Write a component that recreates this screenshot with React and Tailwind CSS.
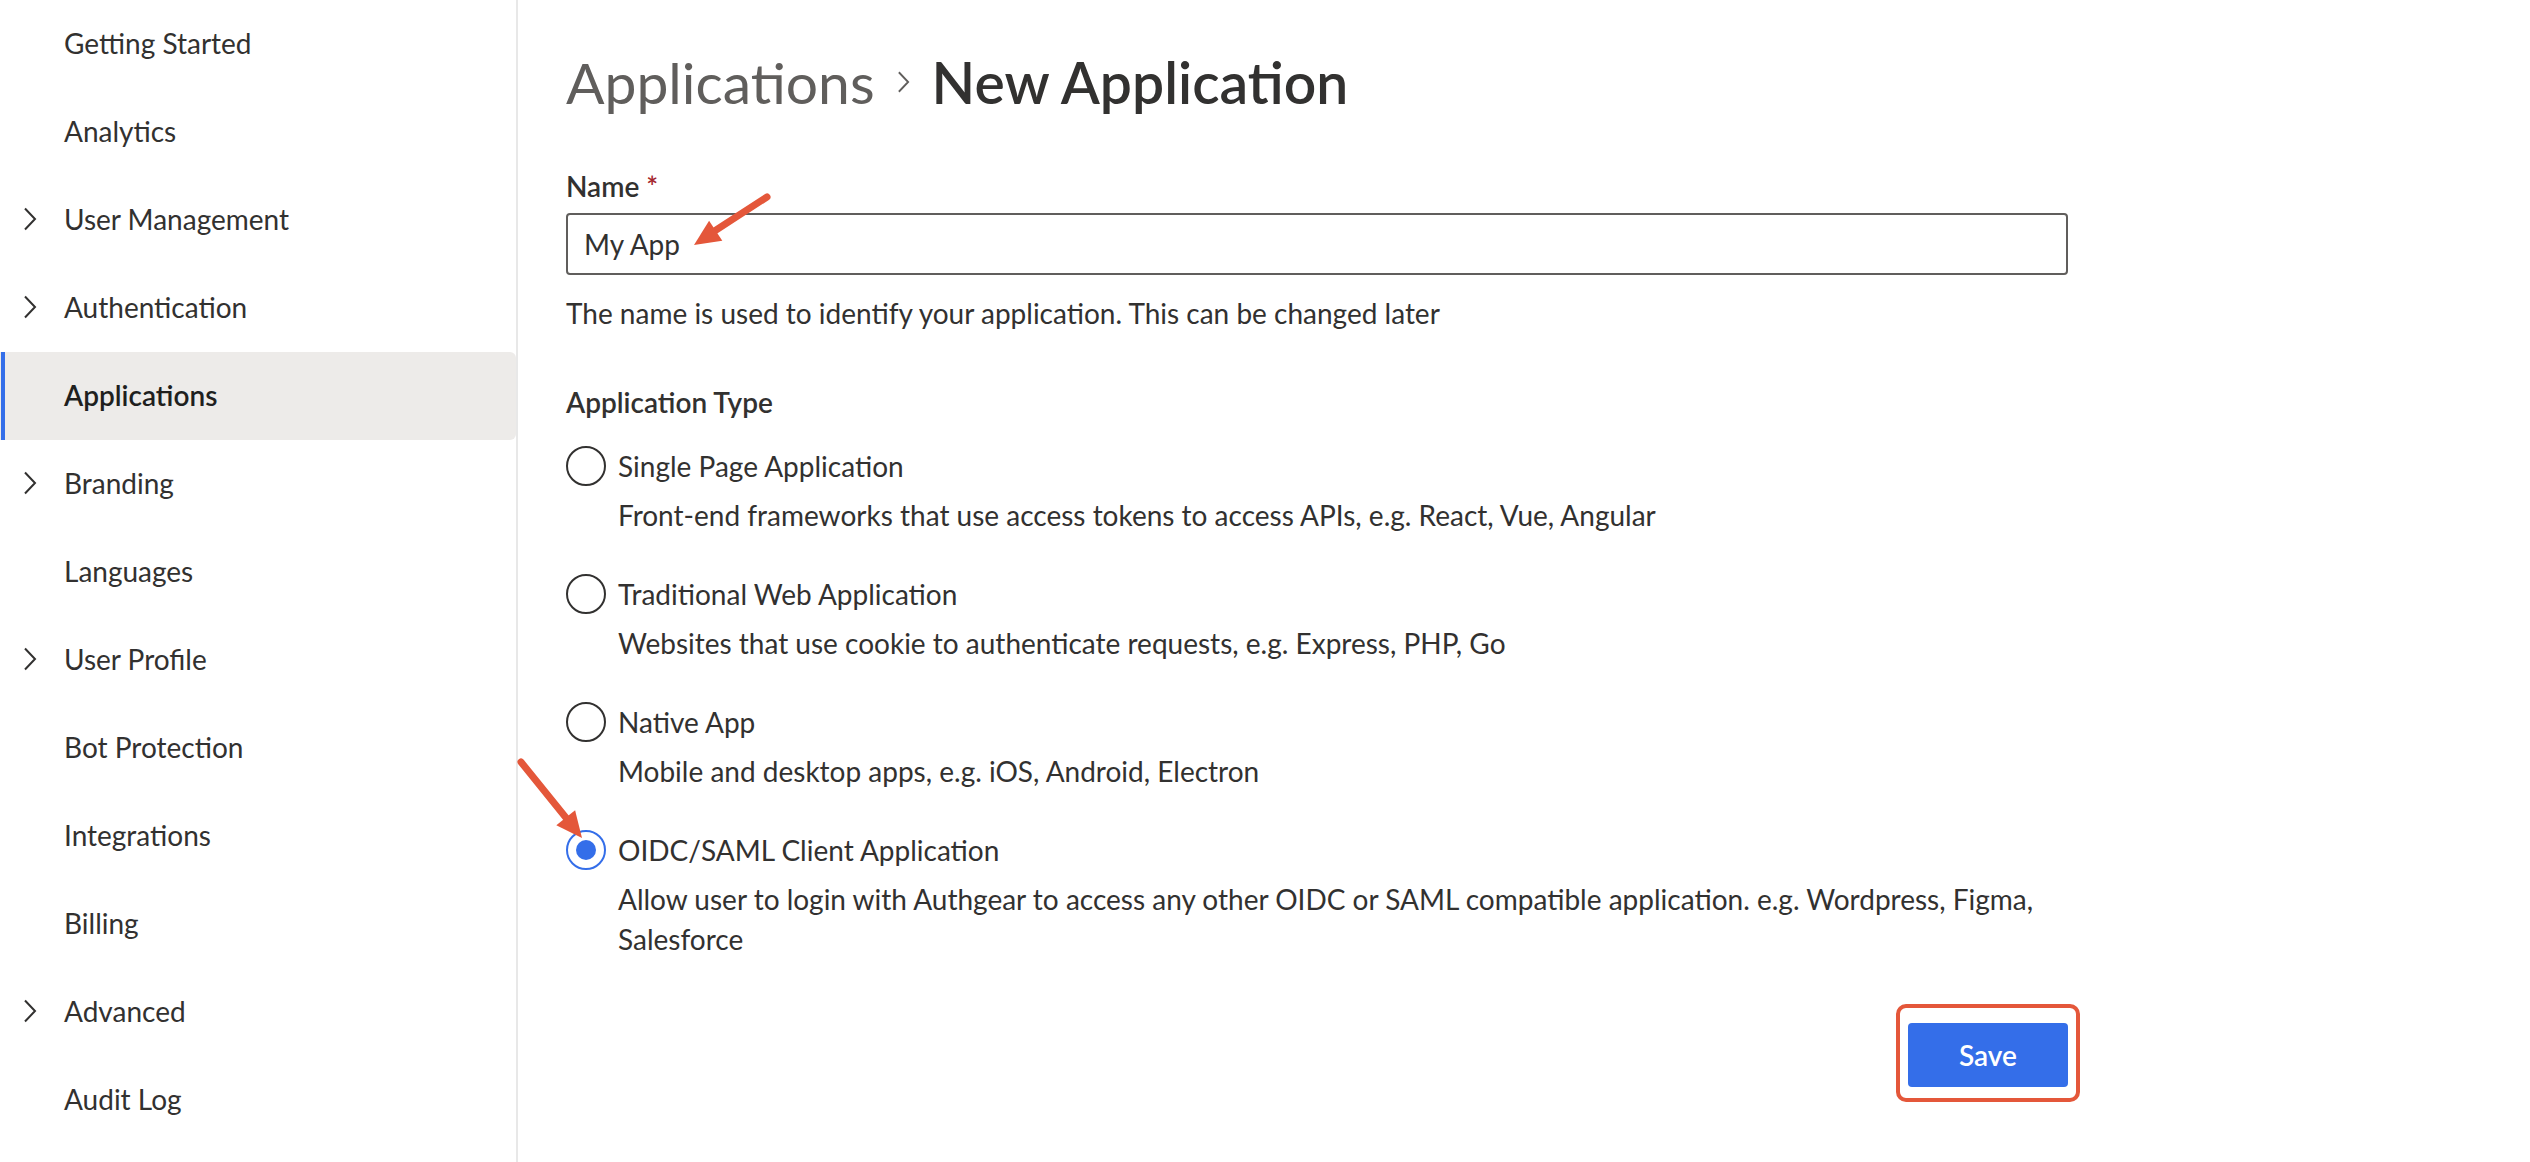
const NAV = [
  { label: "Getting Started" },
  { label: "Analytics" },
  { label: "User Management", expandable: true },
  { label: "Authentication", expandable: true },
  { label: "Applications", active: true },
  { label: "Branding", expandable: true },
  { label: "Languages" },
  { label: "User Profile", expandable: true },
  { label: "Bot Protection" },
  { label: "Integrations" },
  { label: "Billing" },
  { label: "Advanced", expandable: true },
  { label: "Audit Log" },
];

const APP_TYPES = [
  {
    title: "Single Page Application",
    desc: "Front-end frameworks that use access tokens to access APIs, e.g. React, Vue, Angular",
  },
  {
    title: "Traditional Web Application",
    desc: "Websites that use cookie to authenticate requests, e.g. Express, PHP, Go",
  },
  {
    title: "Native App",
    desc: "Mobile and desktop apps, e.g. iOS, Android, Electron",
  },
  {
    title: "OIDC/SAML Client Application",
    desc: (
      <>
        Allow user to login with Authgear to access any other OIDC or SAML compatible application. e.g. Wordpress, Figma,
        <br />
        Salesforce
      </>
    ),
    selected: true,
  },
];

function Chevron({ className, color = "#323130" }) {
  return (
    <svg className={className} width="14" height="24" viewBox="0 0 14 24" fill="none">
      <path d="M2 1.5 L12 12 L2 22.5" stroke={color} strokeWidth="2" strokeLinejoin="miter" />
    </svg>
  );
}

function NavItem({ item }) {
  return (
    <div
      className={
        "relative flex h-[88px] items-center pb-[3px] " +
        (item.active ? "rounded-r-[6px] bg-[#edebe9] font-semibold text-[#201f1e]" : "text-[#323130]")
      }
    >
      {item.active && <span className="absolute left-[1px] top-0 bottom-0 w-[4px] bg-[#346ee9]" />}
      <div className="flex w-[64px] shrink-0 pl-[23px]">
        {item.expandable && <Chevron />}
      </div>
      <span className="text-[28px] leading-[40px]">{item.label}</span>
    </div>
  );
}

function RadioOption({ option }) {
  return (
    <div className="flex">
      <div className="w-[52px] shrink-0">
        {option.selected ? (
          <div className="flex h-[40px] w-[40px] items-center justify-center rounded-full border-2 border-[#346ee9]">
            <div className="h-[20px] w-[20px] rounded-full bg-[#346ee9]" />
          </div>
        ) : (
          <div className="h-[40px] w-[40px] rounded-full border-2 border-[#323130]" />
        )}
      </div>
      <div>
        <div className="text-[28px] leading-[40px] text-[#323130]">{option.title}</div>
        <div className="mt-[9px] whitespace-nowrap text-[28px] leading-[40px] text-[#323130]">{option.desc}</div>
      </div>
    </div>
  );
}

export default function App() {
  return (
    <div className="relative flex h-[1162px] w-full overflow-hidden bg-white font-['Lato',sans-serif] text-[#323130]">
      <aside className="w-[518px] shrink-0 border-r-2 border-[#e8e8e8]">
        {NAV.map((item) => (
          <NavItem key={item.label} item={item} />
        ))}
      </aside>

      <main className="flex-1 pl-[48px] pt-[44px]">
        <div className="w-[1502px]">
          <h1 className="flex items-center text-[57px] leading-[76px]">
            <span className="font-normal text-[#605e5c]">Applications</span>
            <Chevron className="mx-[22px] h-[24px] w-[13px]" color="#605e5c" />
            <span className="font-semibold text-[#323130]">New Application</span>
          </h1>

          <div className="mt-[46px] text-[28px] font-semibold leading-[40px]">
            Name <span className="text-[#a4262c]">*</span>
          </div>
          <input
            readOnly
            value="My App"
            className="mt-[7px] block h-[62px] w-full rounded-[4px] border-2 border-[#605e5c] px-[16px] text-[28px] text-[#323130] outline-none"
          />
          <p className="mt-[18px] text-[28px] leading-[40px]">
            The name is used to identify your application. This can be changed later
          </p>

          <div className="mt-[49px] text-[28px] font-semibold leading-[40px]">Application Type</div>
          <div className="mt-[24px] flex flex-col gap-[39px]">
            {APP_TYPES.map((opt) => (
              <RadioOption key={opt.title} option={opt} />
            ))}
          </div>

          <div className="mt-[64px] flex justify-end">
            <div className="relative">
              <span className="absolute -left-[12px] -right-[12px] -top-[19px] -bottom-[15px] rounded-[10px] border-4 border-[#e4573a]" />
              <button className="relative h-[64px] w-[160px] rounded-[4px] bg-[#346ee9] text-[28px] font-semibold text-white">
                Save
              </button>
            </div>
          </div>
        </div>
      </main>

      <svg className="pointer-events-none absolute inset-0" width="2530" height="1162" viewBox="0 0 2530 1162">
        <line x1="767" y1="197" x2="713" y2="232" stroke="#e4573a" strokeWidth="7" strokeLinecap="round" />
        <polygon points="694,245 722.3,240.7 709.1,220.7" fill="#e4573a" />
        <line x1="521" y1="762" x2="567" y2="819" stroke="#e4573a" strokeWidth="7" strokeLinecap="round" />
        <polygon points="582,838 575.1,810.2 556.3,825.2" fill="#e4573a" />
      </svg>
    </div>
  );
}
